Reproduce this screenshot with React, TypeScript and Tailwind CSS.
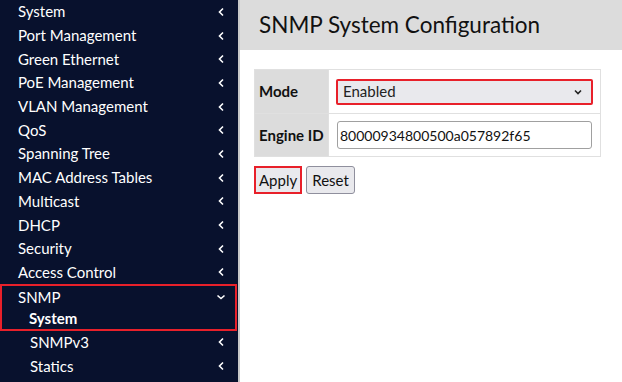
const menu = [
	"System",
	"Port Management",
	"Green Ethernet",
	"PoE Management",
	"VLAN Management",
	"QoS",
	"Spanning Tree",
	"MAC Address Tables",
	"Multicast",
	"DHCP",
	"Security",
	"Access Control",
];

const subItems = ["SNMPv3", "Statics"];

function Chevron({ down }: { down?: boolean }) {
	return (
		<svg width="10" height="10" viewBox="0 0 10 10" className="shrink-0">
			{down ? (
				<path d="M1.5 3.5 L5 6.5 L8.5 3.5" stroke="#fff" strokeWidth="1.6" fill="none" />
			) : (
				<path d="M7 1.5 L3.5 5 L7 8.5" stroke="#fff" strokeWidth="1.6" fill="none" />
			)}
		</svg>
	);
}

function Row({ label, pl, bold, down, arrow = true, pr = "pr-[12px]" }: { label: string; pl: string; bold?: boolean; down?: boolean; arrow?: boolean; pr?: string }) {
	return (
		<div className={`flex h-[23.7px] items-center justify-between ${pl} ${pr}`}>
			<span className={`text-[15px] leading-none text-white ${bold ? "font-bold" : ""}`}>{label}</span>
			{arrow && <Chevron down={down} />}
		</div>
	);
}

export default function App() {
	return (
		<div className="flex h-[382px] w-[622px] overflow-hidden bg-white" style={{ fontFamily: 'Lato, "Noto Sans", sans-serif' }}>
			<aside className="flex w-[238px] shrink-0 flex-col bg-[#08112d]">
				{menu.map((m) => (
					<Row key={m} label={m} pl="pl-[18px]" />
				))}
				<div className="mr-[1px] border-2 border-[#e8202a]">
					<div className="-mt-[1px]">
						<Row label="SNMP" pl="pl-[16px]" pr="pr-[9px]" down />
					</div>
					<div className="-mb-[2px] -mt-[2px]">
						<Row label="System" pl="pl-[27px]" bold arrow={false} />
					</div>
				</div>
				{subItems.map((m) => (
					<Row key={m} label={m} pl="pl-[30px]" />
				))}
			</aside>
			<div className="w-[2px] bg-[#c8c8c8]" />
			<main className="flex flex-1 flex-col">
				<header className="flex h-[50px] items-center bg-[#dcdcdc] pl-[19px]">
					<h1 className="text-[22.5px] leading-none text-[#111]">SNMP System Configuration</h1>
				</header>
				<div className="px-[14px] pt-[19px] pr-[21px]">
					<table className="w-full border-collapse text-[15px]">
						<tbody>
							<tr className="h-[44px]">
								<td className="w-[74px] border border-[#e0e0e0] bg-[#dcdcdc] pl-[4px] font-bold text-[#111]">Mode</td>
								<td className="border border-[#e0e0e0] px-[7px]">
									<div className="flex h-[26px] items-center justify-between rounded-[2px] border-2 border-[#e8202a] bg-[#e9e9ed] pl-[5px] pr-[8px] text-[#222]">
										<span>Enabled</span>
										<svg width="10" height="8" viewBox="0 0 10 8">
											<path d="M2 2.5 L5 5.5 L8 2.5" stroke="#222" strokeWidth="1.6" fill="none" />
										</svg>
									</div>
								</td>
							</tr>
							<tr className="h-[43px]">
								<td className="border border-[#e0e0e0] bg-[#dcdcdc] pl-[4px] font-bold text-[#111]">Engine ID</td>
								<td className="border border-[#e0e0e0] px-[8px]">
									<div className="flex h-[28px] items-center rounded-[3px] border border-[#a0a0a0] bg-white pl-[2px] text-[14px] text-[#111]">
										80000934800500a057892f65
									</div>
								</td>
							</tr>
						</tbody>
					</table>
					<div className="mt-[9px] flex gap-[4px] text-[15px] text-[#111]">
						<button className="h-[28px] border-2 border-[#e8202a] bg-[#e9e9ed] px-[3px]">Apply</button>
						<button className="h-[28px] rounded-[3px] border border-[#8f8f9d] bg-[#e9e9ed] px-[5px]">Reset</button>
					</div>
				</div>
			</main>
		</div>
	);
}
